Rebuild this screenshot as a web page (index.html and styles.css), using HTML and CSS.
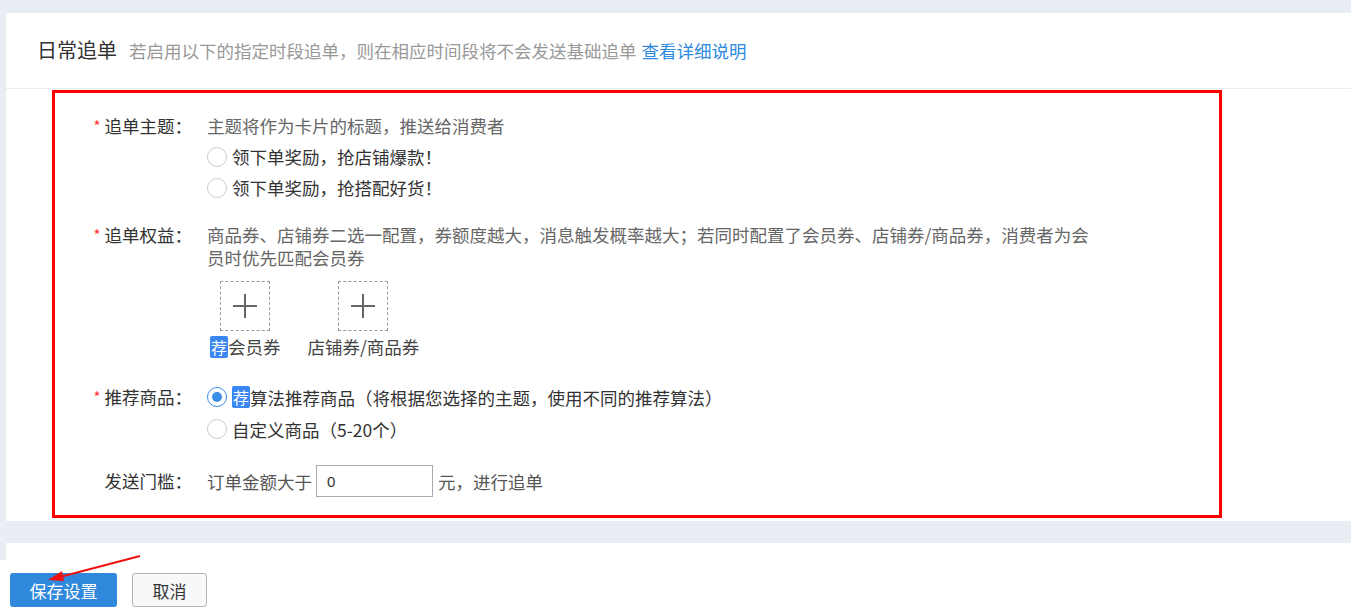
FILE: index.html
```html
<!DOCTYPE html>
<html lang="zh-CN">
<head>
    <meta charset="UTF-8">
    <title>日常追单</title>
    <link rel="stylesheet" href="styles.css">
</head>
<body>

    <div class="panel">
        <div class="panel-header">
            <h2 class="panel-title">日常追单</h2>
            <span class="panel-desc">若启用以下的指定时段追单，则在相应时间段将不会发送基础追单</span>
            <a class="panel-link" href="#">查看详细说明</a>
        </div>

        <div class="highlight-box">
            <!-- 追单主题 -->
            <div class="form-row row-theme">
                <div class="form-label"><span class="required">*</span>追单主题：</div>
                <div class="form-content">
                    <div class="form-tip">主题将作为卡片的标题，推送给消费者</div>
                    <label class="radio"><span class="radio-dot"></span>领下单奖励，抢店铺爆款！</label>
                    <label class="radio"><span class="radio-dot"></span>领下单奖励，抢搭配好货！</label>
                </div>
            </div>

            <!-- 追单权益 -->
            <div class="form-row row-benefit">
                <div class="form-label"><span class="required">*</span>追单权益：</div>
                <div class="form-content">
                    <div class="form-tip wrap-tip">商品券、店铺券二选一配置，券额度越大，消息触发概率越大；若同时配置了会员券、店铺券/商品券，消费者为会员时优先匹配会员券</div>
                    <div class="coupon-list">
                        <div class="coupon-item">
                            <div class="coupon-add"></div>
                            <div class="coupon-name"><span class="badge">荐</span>会员券</div>
                        </div>
                        <div class="coupon-item">
                            <div class="coupon-add"></div>
                            <div class="coupon-name">店铺券/商品券</div>
                        </div>
                    </div>
                </div>
            </div>

            <!-- 推荐商品 -->
            <div class="form-row row-goods">
                <div class="form-label"><span class="required">*</span>推荐商品：</div>
                <div class="form-content">
                    <label class="radio"><span class="radio-dot checked"></span><span class="badge">荐</span>算法推荐商品（将根据您选择的主题，使用不同的推荐算法）</label>
                    <label class="radio"><span class="radio-dot"></span>自定义商品（5-20个）</label>
                </div>
            </div>

            <!-- 发送门槛 -->
            <div class="form-row row-limit">
                <div class="form-label">发送门槛：</div>
                <div class="form-content inline-content">
                    订单金额大于<input class="amount-input" type="text" value="0">元，进行追单
                </div>
            </div>
        </div>
    </div>

    <div class="panel panel-bottom"></div>

    <div class="footer-bar">
        <button class="btn btn-primary">保存设置</button>
        <button class="btn btn-default">取消</button>
    </div>

    <svg class="annotation-arrow" width="110" height="40" viewBox="0 0 110 40">
        <line x1="98" y1="6" x2="14" y2="28" stroke="#f01010" stroke-width="2"/>
        <polygon points="6,30 20,21 22,31" fill="#f01010"/>
    </svg>

</body>
</html>
```

FILE: styles.css
```css
/* Global Styles */
body {
    margin: 0;
    background-color: #e9eef5;
    font-family: "Noto Sans CJK SC", "Noto Sans", sans-serif;
    font-size: 17.5px;
    color: #333;
    height: 613px;
    overflow: hidden;
}

.panel {
    background-color: #fff;
    margin: 13px 0 0 6px;
    padding-bottom: 3px;
}

.panel-header {
    height: 75px;
    border-bottom: 1px solid #ececec;
    padding-left: 31px;
    display: flex;
    align-items: center;
    margin-bottom: 1px;
}

.panel-title {
    font-size: 20px;
    font-weight: normal;
    color: #333;
    margin: 0 12px 0 0;
    position: relative;
    top: -1px;
}

.panel-desc {
    color: #999;
}

.panel-link {
    color: #2d8ae0;
    text-decoration: none;
    margin-left: 5px;
}

/* Highlight box */
.highlight-box {
    margin-left: 46px;
    width: 1164px;
    border: 3px solid #ff0000;
    padding: 18px 0 18px 0;
}

.form-row {
    display: flex;
    margin-bottom: 20px;
}

.form-row:last-child {
    margin-bottom: 0;
}

.form-label {
    width: 137px;
    flex-shrink: 0;
    text-align: right;
    margin-right: 15px;
    color: #333;
    line-height: 30px;
}

.required {
    color: #f33;
    font-size: 15px;
    margin-right: 4px;
    position: relative;
    top: -1px;
}

.form-content {
    flex: 1;
    color: #555;
}

.form-tip {
    line-height: 30px;
    color: #666;
}

.radio {
    display: flex;
    align-items: center;
    height: 31px;
    color: #333;
}

.radio-dot {
    width: 20px;
    height: 20px;
    border: 1px solid #ccc;
    border-radius: 50%;
    margin-right: 5px;
    box-sizing: border-box;
    position: relative;
    flex-shrink: 0;
}

.radio-dot.checked {
    border-color: #3a8ee6;
}

.radio-dot.checked::after {
    content: "";
    position: absolute;
    left: 4px;
    top: 4px;
    width: 10px;
    height: 10px;
    border-radius: 50%;
    background-color: #3a8ee6;
}

.badge {
    display: inline-block;
    background-color: #3a86f2;
    color: #fff;
    border-radius: 2px;
    width: 18px;
    height: 22px;
    line-height: 22px;
    text-align: center;
    font-size: 16px;
}

/* 追单权益 */
.row-benefit .form-label {
    line-height: 23px;
}

.wrap-tip {
    width: 888px;
    line-height: 23px;
}

.coupon-list {
    display: flex;
    gap: 27px;
    margin: 12px 0 0 3px;
}

.coupon-item {
    display: flex;
    flex-direction: column;
    align-items: center;
}

.coupon-add {
    width: 50px;
    height: 50px;
    border: 1px dashed #999;
    box-sizing: border-box;
    position: relative;
}

.coupon-add::before,
.coupon-add::after {
    content: "";
    position: absolute;
    background-color: #666;
}

.coupon-add::before {
    left: 12px;
    top: 23px;
    width: 24px;
    height: 2px;
}

.coupon-add::after {
    left: 23px;
    top: 12px;
    width: 2px;
    height: 24px;
}

.coupon-name {
    margin-top: 4px;
    line-height: 24px;
    color: #444;
    display: flex;
    align-items: center;
}

/* 推荐商品 */
.row-goods {
    margin-top: 22px;
}

.row-goods .form-label {
    line-height: 32px;
}

.row-goods .radio {
    height: 32px;
}

/* 发送门槛 */
.row-limit .form-label {
    line-height: 32px;
}

.inline-content {
    display: flex;
    align-items: center;
    height: 32px;
    color: #555;
}

.amount-input {
    width: 117px;
    height: 32px;
    box-sizing: border-box;
    border: 1px solid #aaa;
    margin: 0 5px 0 4px;
    padding: 0 10px;
    font-family: "Liberation Sans", Arial, sans-serif;
    font-size: 15px;
    color: #333;
    outline: none;
}

/* Bottom */
.panel-bottom {
    margin-top: 22px;
    height: 80px;
}

.footer-bar {
    position: fixed;
    left: 0;
    right: 0;
    bottom: 0;
    height: 53px;
    background-color: #fff;
    padding: 13px 0 0 10px;
    box-sizing: border-box;
    display: flex;
    gap: 15px;
    align-items: flex-start;
}

.btn {
    height: 34px;
    border-radius: 3px;
    font-family: "Noto Sans CJK SC", sans-serif;
    font-size: 17px;
    cursor: pointer;
}

.btn-primary {
    width: 107px;
    border: none;
    background-color: #2f88dc;
    color: #fff;
}

.btn-default {
    width: 75px;
    border: 1px solid #b4b4b4;
    background-color: #f7f8fa;
    color: #333;
}

.annotation-arrow {
    position: fixed;
    left: 42px;
    top: 550px;
}
```
